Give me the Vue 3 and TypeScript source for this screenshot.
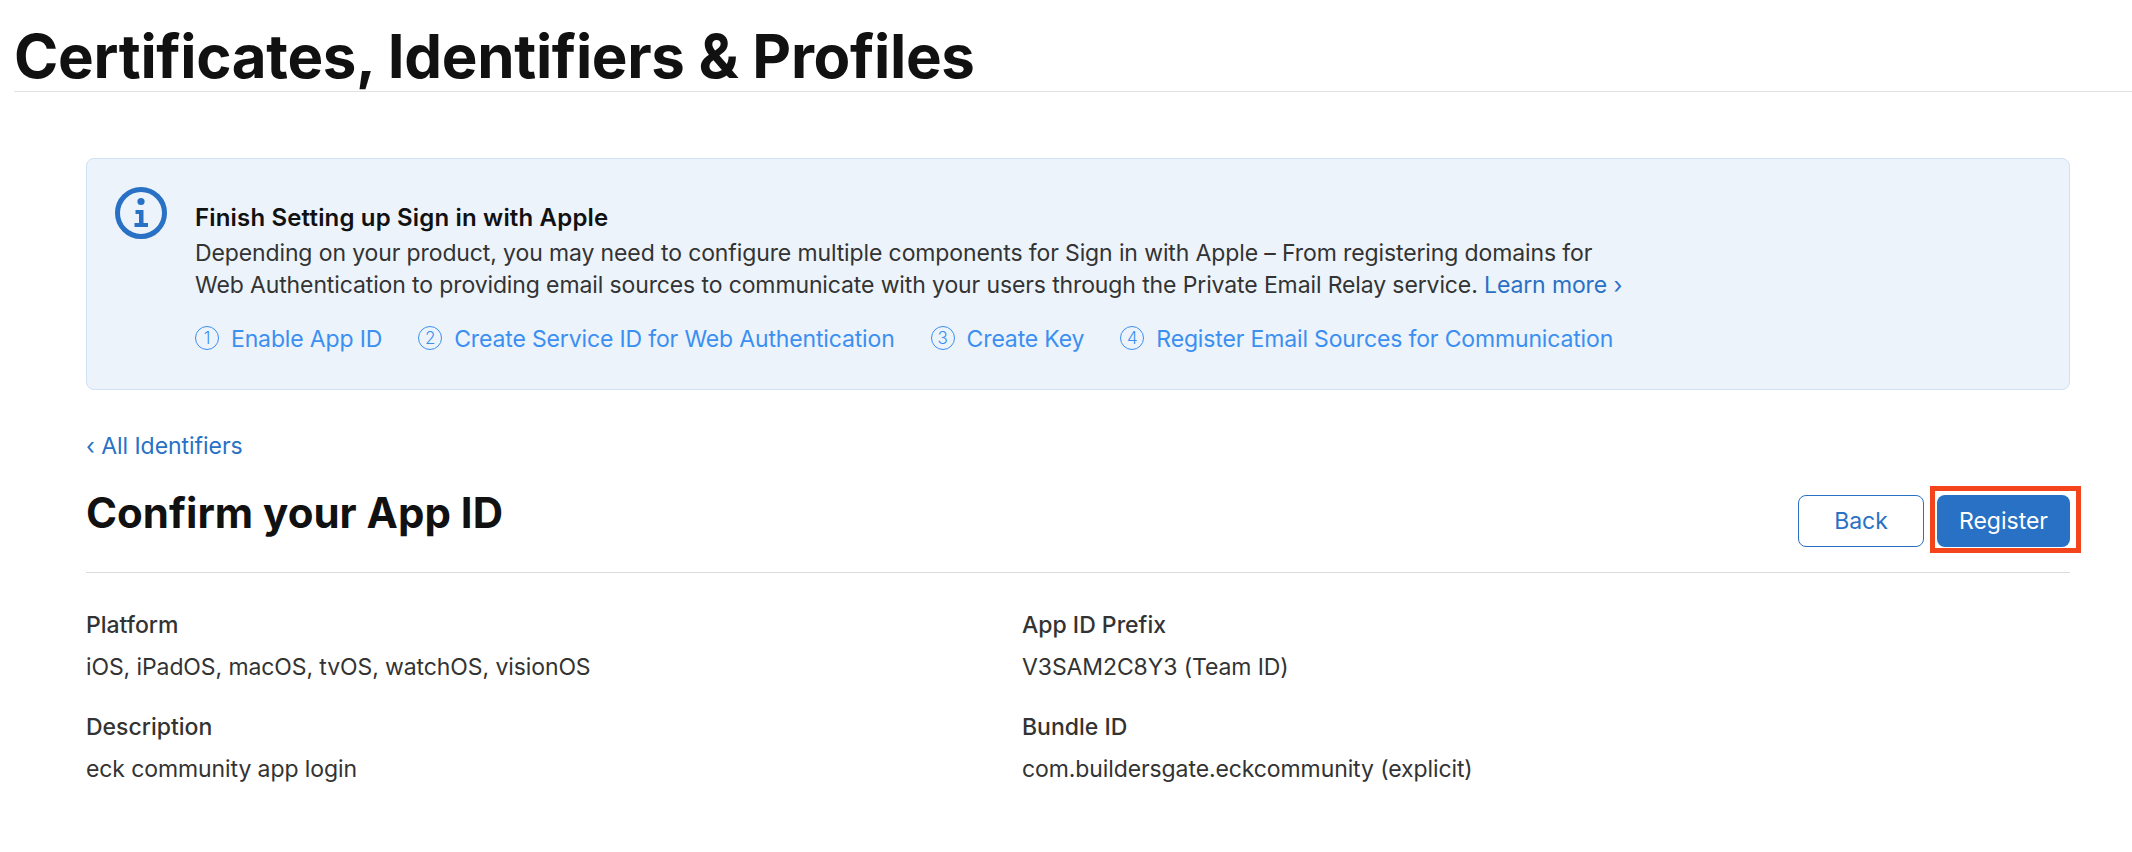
<script setup lang="ts">
interface Step { n: number; label: string }
interface Field { label: string; value: string }
const steps: Step[] = [
  { n: 1, label: 'Enable App ID' },
  { n: 2, label: 'Create Service ID for Web Authentication' },
  { n: 3, label: 'Create Key' },
  { n: 4, label: 'Register Email Sources for Communication' },
]
const left: Field[] = [
  { label: 'Platform', value: 'iOS, iPadOS, macOS, tvOS, watchOS, visionOS' },
  { label: 'Description', value: 'eck community app login' },
]
const right: Field[] = [
  { label: 'App ID Prefix', value: 'V3SAM2C8Y3 (Team ID)' },
  { label: 'Bundle ID', value: 'com.buildersgate.eckcommunity (explicit)' },
]
</script>

<template>
  <div class="page">
    <header class="top"><h1>Certificates, Identifiers &amp; Profiles</h1></header>
    <main class="content">
      <section class="banner">
        <svg class="info" width="52" height="52" viewBox="0 0 52 52" aria-hidden="true">
          <circle cx="26" cy="26" r="23.5" fill="none" stroke="#2871c5" stroke-width="5" />
          <circle cx="26" cy="14.5" r="3.6" fill="#2871c5" />
          <path d="M20.5 23h8v13h4.5v4H19.500v-4h4.500v-9h-3.500z" fill="#2871c5" />
        </svg>
        <div class="banner-body">
          <h3>Finish Setting up Sign in with Apple</h3>
          <p>Depending on your product, you may need to configure multiple components for Sign in with Apple – From registering domains for<br />Web Authentication to providing email sources to communicate with your users through the Private Email Relay service. <a class="link">Learn more ›</a></p>
          <ol class="steps">
            <li v-for="s in steps" :key="s.n"><span class="num">{{ s.n }}</span><span>{{ s.label }}</span></li>
          </ol>
        </div>
      </section>
      <a class="back link">‹ All Identifiers</a>
      <div class="head">
        <h2>Confirm your App ID</h2>
        <div class="actions">
          <button class="btn ghost">Back</button>
          <span class="focus"><button class="btn primary">Register</button></span>
        </div>
      </div>
      <div class="grid">
        <div class="col">
          <div v-for="f in left" :key="f.label" class="field"><div class="lab">{{ f.label }}</div><div class="val">{{ f.value }}</div></div>
        </div>
        <div class="col">
          <div v-for="f in right" :key="f.label" class="field"><div class="lab">{{ f.label }}</div><div class="val">{{ f.value }}</div></div>
        </div>
      </div>
    </main>
  </div>
</template>

<style>
html, body { background: #fff; }
</style>
<style scoped>
.page { width: 2132px; height: 852px; overflow: hidden; font-family: Inter, "Liberation Sans", sans-serif; color: #333; background: #fff; }
.top { margin-left: 14px; height: 92px; border-bottom: 1px solid #e2e2e2; box-sizing: border-box; }
h1 { margin: 0; padding-top: 21px; font-size: 60px; line-height: 70px; font-weight: 700; color: #111; letter-spacing: -0.33px; }
.content { padding: 66px 62px 0 86px; }
.banner { display: flex; height: 232px; box-sizing: border-box; background: #ecf3fb; border: 1px solid #cfe1f4; border-radius: 8px; padding: 28px 28px 0; }
.info { flex: none; margin-right: 28px; }
.banner-body { padding-top: 15px; }
h3 { margin: 0 0 3px; font-size: 24px; line-height: 32px; font-weight: 600; color: #111; letter-spacing: 0.17px; }
p { margin: 0; font-size: 23px; line-height: 32px; color: #333; letter-spacing: -0.12px; }
.link { color: #2871c5; }
.steps { list-style: none; margin: 22px 0 0; padding: 0; display: flex; gap: 36px; font-size: 23px; line-height: 32px; color: #3b8ff0; letter-spacing: -0.15px; }
.steps li { display: flex; align-items: center; gap: 12px; }
.num { width: 24px; height: 24px; box-sizing: border-box; border: 1px solid #3b8ff0; border-radius: 50%; display: flex; align-items: center; justify-content: center; font-size: 17px; font-weight: 300; margin-top: -2px; }
.back { display: block; margin-top: 40px; font-size: 23px; line-height: 32px; letter-spacing: -0.05px; }
.head { display: flex; justify-content: space-between; height: 111px; box-sizing: border-box; border-bottom: 1px solid #dcdcdc; }
h2 { margin: 23px 0 0; font-size: 42px; line-height: 56px; font-weight: 700; color: #111; }
.actions { display: flex; gap: 13px; margin-top: 33px; height: 52px; }
.btn { height: 52px; box-sizing: border-box; border-radius: 8px; font: 400 23px/1 Inter, sans-serif; }
.ghost { width: 126px; background: #fff; border: 1px solid #2871c5; color: #2871c5; }
.primary { width: 133px; background: #2871c5; border: 0; color: #fff; }
.focus { position: relative; display: block; }
.focus::after { content: ""; position: absolute; inset: -9px -11px -6px -7px; border: 5px solid #f4441c; pointer-events: none; }
.grid { display: grid; grid-template-columns: 936px 1fr; margin-top: 36px; }
.field { margin-bottom: 28px; }
.lab, .val { font-size: 23px; line-height: 32px; }
.lab { color: #333; font-weight: 500; }
.val { margin-top: 10px; letter-spacing: -0.1px; }
</style>
